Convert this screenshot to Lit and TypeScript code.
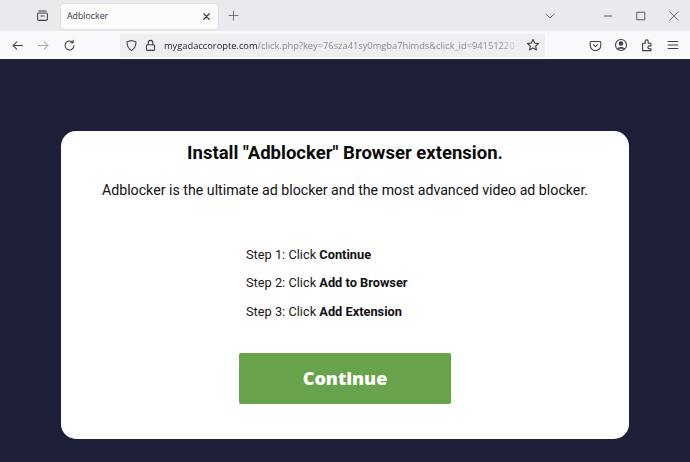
import { LitElement, html, css, svg } from "lit";
import { customElement } from "lit/decorators.js";

const ic = (w: number, body: unknown, cls = "") => html`<svg class="ic ${cls}" width="${w}" height="${w}" viewBox="0 0 16 16" fill="none" stroke="#3f3f46" stroke-width="1.3" stroke-linecap="round" stroke-linejoin="round">${body}</svg>`;

@customElement("app-root")
export class AppRoot extends LitElement {
  static styles = css`
    :host { display: flex; flex-direction: column; width: 690px; height: 462px; overflow: hidden; background: #1c1f37; font-family: "Open Sans", "Noto Sans", sans-serif; }
    .ic { display: block; flex: none; }
    .tabbar { height: 31px; background: #e9e9ee; display: flex; align-items: center; flex: none; }
    .view { width: 58px; display: flex; justify-content: center; padding-left: 26px; box-sizing: border-box; }
    .tab { width: 157px; height: 25px; margin-left: 3px; margin-top: 1px; background: #fbfbfc; border-radius: 3px; box-shadow: 0 0 2px #0002; display: flex; align-items: center; justify-content: space-between; padding: 0 6px 0 6px; box-sizing: border-box; font-size: 8.800px; color: #3a3a40; }
    .plus { margin-left: 9px; }
    .spacer { flex: 1; }
    .caret { margin-right: 46px; }
    .winbtn { display: flex; gap: 21px; margin-right: 10px; align-items: center; }
    .nav { height: 28px; background: #f9f9fb; display: flex; align-items: center; flex: none; padding-left: 11px; }
    .navbtns { display: flex; gap: 13px; align-items: center; width: 109px; }
    .url { width: 425px; height: 23px; background: #efeff2; display: flex; align-items: center; padding: 0 5px 0 5px; box-sizing: border-box; gap: 6px; }
    .addr { flex: 1; min-width: 0; white-space: nowrap; overflow: hidden; font-size: 9.300px; padding-left: 1px; color: #8a8a92; -webkit-mask-image: linear-gradient(90deg, #000 94%, transparent); mask-image: linear-gradient(90deg, #000 94%, transparent); }
    .addr b { font-weight: 500; color: #1d1d22; }
    .tools { display: flex; gap: 12px; margin-left: 44px; align-items: center; }
    .page { flex: 1; display: flex; justify-content: center; align-items: flex-start; padding-top: 70.500px; border-top: 1px solid #2a2a32; }
    .card { width: 568px; height: 308px; background: #fff; border-radius: 15px; display: flex; flex-direction: column; align-items: center; box-sizing: border-box; padding-top: 10px; color: #000; font-family: Roboto, sans-serif; }
    h1 { margin: 0; font-size: 18.500px; line-height: 24px; font-weight: 700; color: #0a0a0a; }
    .lead { margin: 15.500px 0 0; font-size: 14.200px; line-height: 20px; color: #111; }
    .steps { margin-top: 45px; align-self: flex-start; margin-left: 185px; display: flex; flex-direction: column; gap: 9.250px; font-size: 12.800px; line-height: 19px; color: #1a1a1a; }
    .steps b { font-weight: 700; color: #111; }
    .btn { margin-top: 32.500px; width: 212.500px; height: 50.500px; background: #67a34a; border-radius: 2px; display: flex; align-items: center; justify-content: center; color: #fff; font-family: "Open Sans", sans-serif; font-weight: 800; font-size: 18px; }
  `;

  render() {
    return html`
      <div class="tabbar">
        <div class="view">${ic(13, svg`<rect x="2" y="5" width="12" height="9" rx="1.5"/><path d="M3.5 2.5h9M6 8.5h4"/>`)}</div>
        <div class="tab"><span>Adblocker</span>${ic(11, svg`<path d="M4 4l8 8M12 4l-8 8" stroke-width="1.8"/>`)}</div>
        <div class="plus">${ic(13, svg`<path d="M8 2.5v11M2.5 8h11" stroke="#777"/>`)}</div>
        <div class="spacer"></div>
        <div class="caret">${ic(12, svg`<path d="M2.5 5.5L8 10.5l5.500-5" stroke="#666"/>`)}</div>
        <div class="winbtn">
          ${ic(12, svg`<path d="M3 8h10" stroke-width="1.4" stroke="#555"/>`)}
          ${ic(12, svg`<rect x="3" y="3" width="10" height="10" stroke="#555"/>`)}
          ${ic(12, svg`<path d="M2.500 2.500l11 11M13.500 2.500l-11 11" stroke="#555" stroke-width="1.100"/>`)}
        </div>
      </div>
      <div class="nav">
        <div class="navbtns">
          ${ic(13, svg`<path d="M14 8H2.500M7 3.500L2.500 8 7 12.500"/>`)}
          ${ic(13, svg`<path d="M2 8h11.500M9 3.500L13.500 8 9 12.500" stroke="#a9a9b0"/>`)}
          ${ic(13, svg`<path d="M13.500 8a5.500 5.500 0 1 1-1.800-4.100M12.500 1.500v3h-3"/>`)}
        </div>
        <div class="url">
          ${ic(13, svg`<path d="M8 1.800l5.500 1.700c0 5-1.500 8.800-5.500 10.700C4 12.300 2.500 8.500 2.500 3.500z"/>`)}
          ${ic(13, svg`<rect x="3" y="7" width="10" height="7" rx="1.200"/><path d="M5.200 7V4.500a2.800 2.800 0 0 1 5.600 0V7"/>`)}
          <div class="addr"><b>mygadaccoropte.com</b>/click.php?key=76sza41sy0mgba7himds&amp;click_id=94151220-</div>
          ${ic(14, svg`<path d="M8 1.800l1.900 4 4.300.5-3.200 3 .9 4.400L8 11.500l-3.900 2.200.9-4.400-3.200-3 4.300-.5z"/>`)}
        </div>
        <div class="tools">
          ${ic(13, svg`<path d="M2.500 3h11a1 1 0 0 1 1 1v4a6.500 6.500 0 0 1-13 0V4a1 1 0 0 1 1-1z"/><path d="M5.500 7L8 9.500 10.500 7"/>`)}
          ${ic(14, svg`<circle cx="8" cy="8" r="6.300"/><circle cx="8" cy="6.300" r="2" fill="#3f3f46"/><path d="M4.300 12.300c1-1.900 6.400-1.900 7.400 0" fill="#3f3f46"/>`)}
          ${ic(14, svg`<path d="M3 6h3V3.800a1.700 1.700 0 0 1 3.400 0V6h3.100v3h-1.800a1.700 1.700 0 0 0 0 3.400h1.800v2.100H3z"/>`)}
          ${ic(14, svg`<path d="M2.500 4h11M2.500 8h11M2.500 12h11"/>`)}
        </div>
      </div>
      <div class="page">
        <div class="card">
          <h1>Install "Adblocker" Browser extension.</h1>
          <p class="lead">Adblocker is the ultimate ad blocker and the most advanced video ad blocker.</p>
          <div class="steps">
            <div>Step 1: Click <b>Continue</b></div>
            <div>Step 2: Click <b>Add to Browser</b></div>
            <div>Step 3: Click <b>Add Extension</b></div>
          </div>
          <div class="btn">Continue</div>
        </div>
      </div>
    `;
  }
}
